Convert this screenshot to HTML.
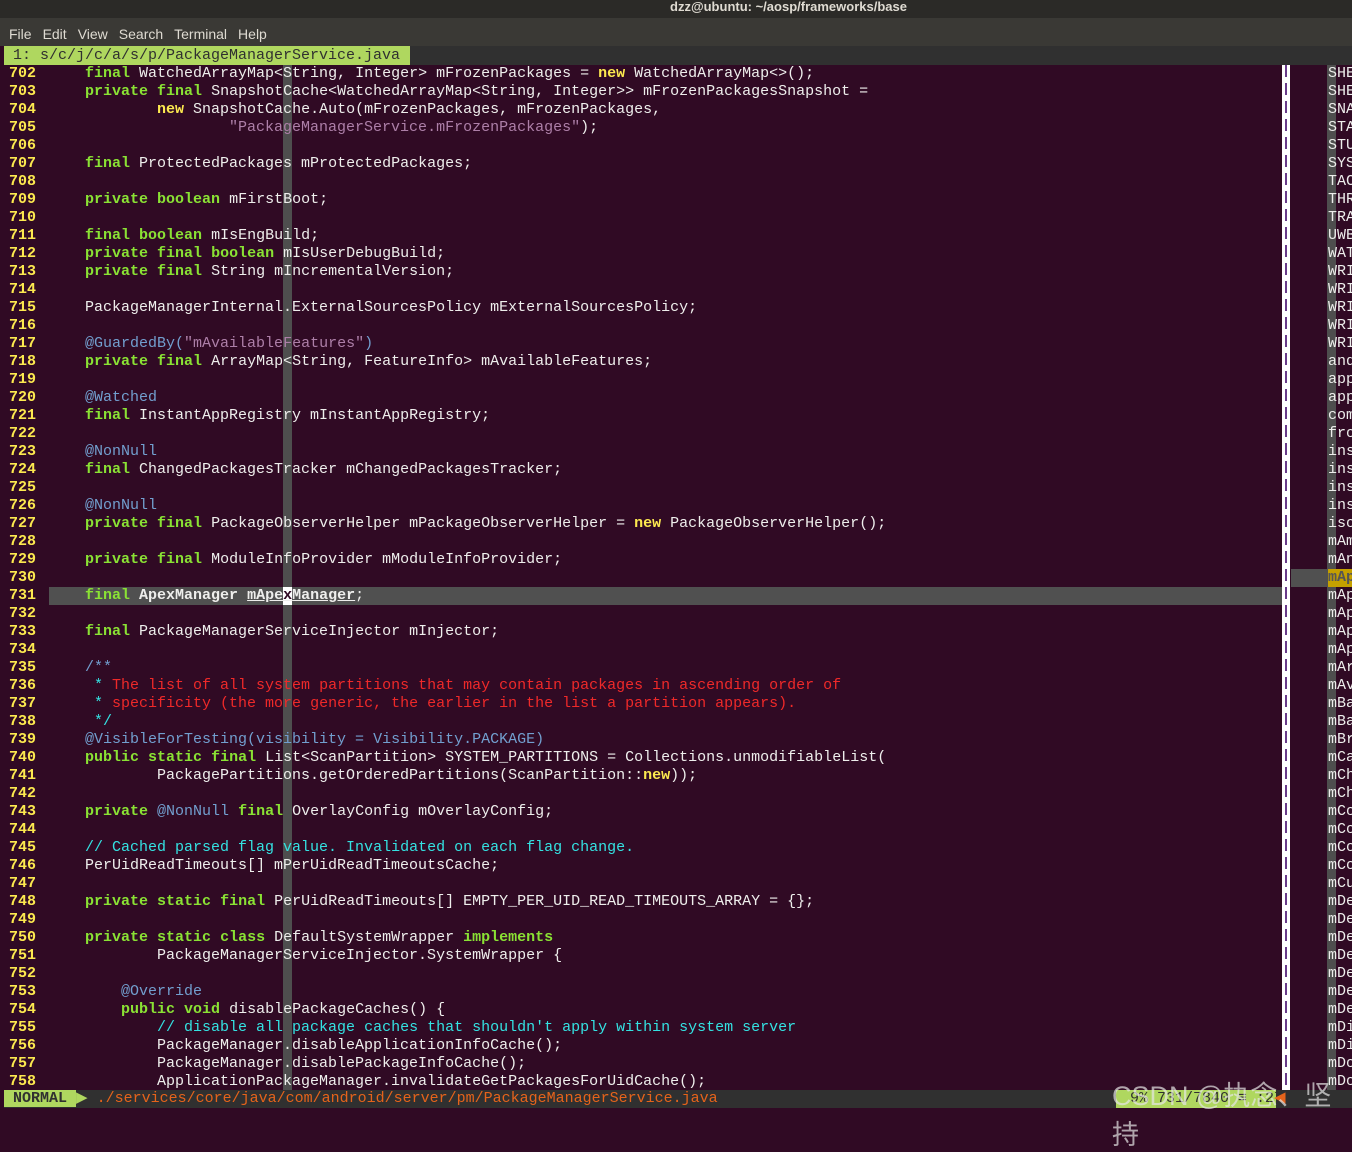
<!DOCTYPE html>
<html><head><meta charset="utf-8"><style>
*{margin:0;padding:0;box-sizing:border-box}
body{width:1352px;height:1118px;background:#300a24;overflow:hidden;position:relative;font-family:"Liberation Mono",monospace;font-size:15px;color:#eeeeec}
#title{position:absolute;left:0;top:0;width:1352px;height:18px;background:#2b2a27;color:#dfdbd2;font:bold 13px "Liberation Sans",sans-serif;text-align:center;line-height:14px;padding-left:225px}
#menu{position:absolute;left:0;top:18px;width:1352px;height:28px;background:#3a3935;color:#dfdbd2;font:14px "Liberation Sans",sans-serif;line-height:32px;padding-left:9px;word-spacing:2px}
#menu span{margin-right:11px}
#tabline{position:absolute;left:4px;top:46px;width:1348px;height:19px;background:#303030}
#tab{position:absolute;left:4px;top:46px;width:406px;height:19px;background:#afd75f;color:#303030;line-height:19px;padding-left:9px}
.l{position:absolute;left:4px;height:18px;line-height:18px;white-space:pre}
.n{color:#fce94f;font-weight:bold;position:absolute;left:9px;height:18px;line-height:18px}
.k{color:#8ae234;font-weight:bold}.y{color:#fce94f;font-weight:bold}.a{color:#729fcf}.s{color:#ad7fa8}.r{color:#ef2929}.c{color:#34e2e2}.b{font-weight:bold}
#cc{position:absolute;left:283px;top:65px;width:9px;height:1025px;background:#4e4e4e}
#cl{position:absolute;left:49px;top:587px;width:1234px;height:18px;background:#505050}
#vbar{position:absolute;left:1282px;top:65px;width:8px;height:1025px;background:#fff}
#vbar2{position:absolute;left:1285px;top:65px;width:2px;height:1025px;background:repeating-linear-gradient(#6a3a8a 0 12px,#fff 12px 18px)}
#rc{position:absolute;left:1327px;top:65px;width:9px;height:1025px;background:#4e4e4e}
#rhl{position:absolute;left:1291px;top:569px;width:61px;height:18px;background:#505050}
.rt{position:absolute;left:1328px;height:18px;line-height:18px;white-space:pre;color:#eeeeec}
#status{position:absolute;left:4px;top:1090px;width:1348px;height:18px;background:#303030;line-height:18px;white-space:pre}
#wm{position:absolute;left:1112px;top:1074px;font:27px "Liberation Sans","Noto Sans CJK SC",sans-serif;color:rgba(230,230,230,0.7)}
</style></head><body>
<div id="title">dzz@ubuntu: ~/aosp/frameworks/base</div>
<div id="menu"><span>File</span><span>Edit</span><span>View</span><span>Search</span><span>Terminal</span><span>Help</span></div>
<div id="tabline"></div>
<div id="tab">1: s/c/j/c/a/s/p/PackageManagerService.java</div>
<div id="cl"></div>
<div id="cc"></div>
<div style="position:absolute;left:283px;top:587px;width:9px;height:18px;background:#fff"></div>
<div id="code"></div>
<div id="vbar"></div><div id="vbar2"></div>
<div id="rc"></div>
<div id="rhl"></div>
<div style="position:absolute;left:1328px;top:569px;width:24px;height:18px;background:#c4a000"></div>
<div id="right"></div>
<div id="status"><span style="background:#afd75f;color:#303030;font-weight:bold;padding:0 9px">NORMAL</span><span style="color:#afd75f">▶</span><span style="color:#555"> </span><span style="color:#e5631b">./services/core/java/com/android/server/pm/PackageManagerService.java</span><span style="position:absolute;left:1112px;top:0;width:160px;height:18px;background:#afd75f;color:#303030;padding-left:14px">9% 731/7840 ≡ :27</span><span style="position:absolute;left:1270px;color:#e5631b">◀</span></div>
<div id="wm">CSDN @执念、坚持</div>
<script>
var L=[
'    <span class=k>final</span> WatchedArrayMap&lt;String, Integer&gt; mFrozenPackages = <span class=y>new</span> WatchedArrayMap&lt;&gt;();',
'    <span class=k>private</span> <span class=k>final</span> SnapshotCache&lt;WatchedArrayMap&lt;String, Integer&gt;&gt; mFrozenPackagesSnapshot =',
'            <span class=y>new</span> SnapshotCache.Auto(mFrozenPackages, mFrozenPackages,',
'                    <span class=s>"PackageManagerService.mFrozenPackages"</span>);',
'',
'    <span class=k>final</span> ProtectedPackages mProtectedPackages;',
'',
'    <span class=k>private</span> <span class=k>boolean</span> mFirstBoot;',
'',
'    <span class=k>final</span> <span class=k>boolean</span> mIsEngBuild;',
'    <span class=k>private</span> <span class=k>final</span> <span class=k>boolean</span> mIsUserDebugBuild;',
'    <span class=k>private</span> <span class=k>final</span> String mIncrementalVersion;',
'',
'    PackageManagerInternal.ExternalSourcesPolicy mExternalSourcesPolicy;',
'',
'    <span class=a>@GuardedBy(</span><span class=s>"mAvailableFeatures"</span><span class=a>)</span>',
'    <span class=k>private</span> <span class=k>final</span> ArrayMap&lt;String, FeatureInfo&gt; mAvailableFeatures;',
'',
'    <span class=a>@Watched</span>',
'    <span class=k>final</span> InstantAppRegistry mInstantAppRegistry;',
'',
'    <span class=a>@NonNull</span>',
'    <span class=k>final</span> ChangedPackagesTracker mChangedPackagesTracker;',
'',
'    <span class=a>@NonNull</span>',
'    <span class=k>private</span> <span class=k>final</span> PackageObserverHelper mPackageObserverHelper = <span class=y>new</span> PackageObserverHelper();',
'',
'    <span class=k>private</span> <span class=k>final</span> ModuleInfoProvider mModuleInfoProvider;',
'',
'    <span class=k>final</span> <span class=b>ApexManager</span> <span class=b style="text-decoration:underline">mApe<span style="color:#300a24">x</span>Manager</span>;',
'',
'    <span class=k>final</span> PackageManagerServiceInjector mInjector;',
'',
'    <span class=a>/**</span>',
'<span class=c>     *</span> <span class=r>The list of all system partitions that may contain packages in ascending order of</span>',
'<span class=c>     *</span> <span class=r>specificity (the more generic, the earlier in the list a partition appears).</span>',
'<span class=c>     */</span>',
'    <span class=a>@VisibleForTesting(visibility = Visibility.PACKAGE)</span>',
'    <span class=k>public</span> <span class=k>static</span> <span class=k>final</span> List&lt;ScanPartition&gt; SYSTEM_PARTITIONS = Collections.unmodifiableList(',
'            PackagePartitions.getOrderedPartitions(ScanPartition::<span class=y>new</span>));',
'',
'    <span class=k>private</span> <span class=a>@NonNull</span> <span class=k>final</span> OverlayConfig mOverlayConfig;',
'',
'    <span class=c>// Cached parsed flag value. Invalidated on each flag change.</span>',
'    PerUidReadTimeouts[] mPerUidReadTimeoutsCache;',
'',
'    <span class=k>private</span> <span class=k>static</span> <span class=k>final</span> PerUidReadTimeouts[] EMPTY_PER_UID_READ_TIMEOUTS_ARRAY = {};',
'',
'    <span class=k>private</span> <span class=k>static</span> <span class=k>class</span> DefaultSystemWrapper <span class=k>implements</span>',
'            PackageManagerServiceInjector.SystemWrapper {',
'',
'        <span class=a>@Override</span>',
'        <span class=k>public</span> <span class=k>void</span> disablePackageCaches() {',
'            <span class=c>// disable all package caches that shouldn\'t apply within system server</span>',
'            PackageManager.disableApplicationInfoCache();',
'            PackageManager.disablePackageInfoCache();',
'            ApplicationPackageManager.invalidateGetPackagesForUidCache();'];
var R="SHE SHE SNA STA STU SYS TAC THR TRA UWB WAT WRI WRI WRI WRI WRI and app app com fro ins ins ins ins iso mAm mAn mAp mAp mAp mAp mAp mAr mAv mBa mBa mBr mCa mCh mCh mCo mCo mCo mCo mCu mDe mDe mDe mDe mDe mDe mDe mDi mDi mDo mDo".split(" ");
var h="",r="";
for(var i=0;i<L.length;i++){var t=65+i*18;
h+='<div class=n style="top:'+t+'px">'+(702+i)+'</div><div class=l style="left:49px;top:'+t+'px">'+L[i]+'</div>';
r+='<div class=rt style="top:'+t+'px'+(i==28?';color:#555;font-weight:bold':'')+'">'+R[i]+'</div>';}
document.getElementById("code").innerHTML=h;document.getElementById("right").innerHTML=r;
</script>
</body></html>
